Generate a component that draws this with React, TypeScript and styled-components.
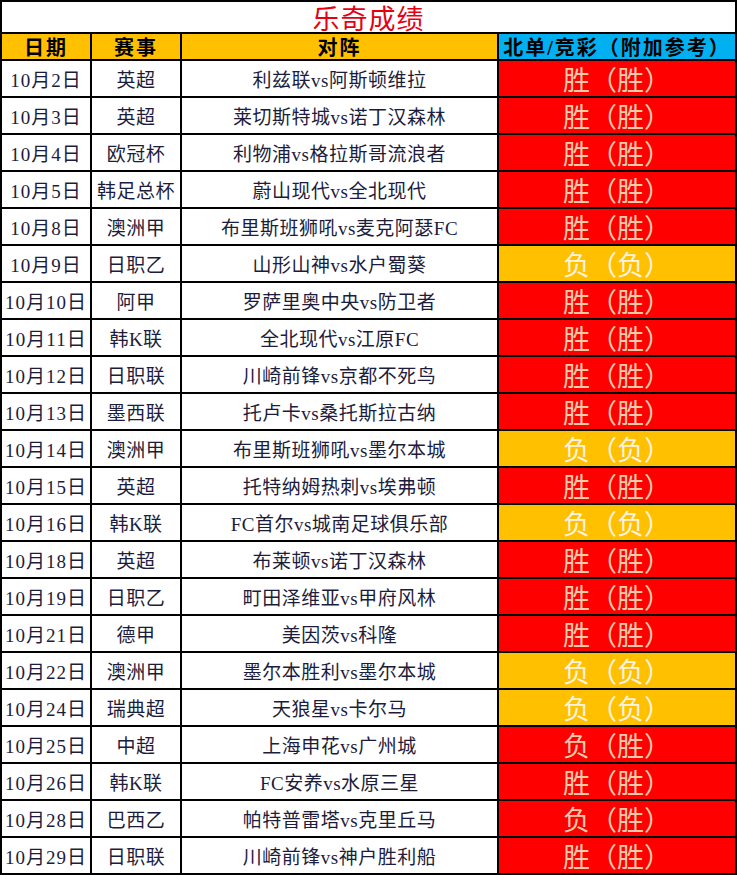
import styled, { createGlobalStyle } from "styled-components";

const GlobalStyle = createGlobalStyle`
    html, body {
        margin: 0;
        padding: 0;
        background: #ffffff;
    }
    body {
        font-family: "Liberation Serif", "Noto Sans CJK SC", serif;
    }
`;

type Outcome = "win" | "lose";

interface Match {
    date: string;
    league: string;
    teams: string;
    result: string;
    tone: Outcome;
}

const matches: Match[] = [
    { date: "10月2日", league: "英超", teams: "利兹联vs阿斯顿维拉", result: "胜（胜）", tone: "win" },
    { date: "10月3日", league: "英超", teams: "莱切斯特城vs诺丁汉森林", result: "胜（胜）", tone: "win" },
    { date: "10月4日", league: "欧冠杯", teams: "利物浦vs格拉斯哥流浪者", result: "胜（胜）", tone: "win" },
    { date: "10月5日", league: "韩足总杯", teams: "蔚山现代vs全北现代", result: "胜（胜）", tone: "win" },
    { date: "10月8日", league: "澳洲甲", teams: "布里斯班狮吼vs麦克阿瑟FC", result: "胜（胜）", tone: "win" },
    { date: "10月9日", league: "日职乙", teams: "山形山神vs水户蜀葵", result: "负（负）", tone: "lose" },
    { date: "10月10日", league: "阿甲", teams: "罗萨里奥中央vs防卫者", result: "胜（胜）", tone: "win" },
    { date: "10月11日", league: "韩K联", teams: "全北现代vs江原FC", result: "胜（胜）", tone: "win" },
    { date: "10月12日", league: "日职联", teams: "川崎前锋vs京都不死鸟", result: "胜（胜）", tone: "win" },
    { date: "10月13日", league: "墨西联", teams: "托卢卡vs桑托斯拉古纳", result: "胜（胜）", tone: "win" },
    { date: "10月14日", league: "澳洲甲", teams: "布里斯班狮吼vs墨尔本城", result: "负（负）", tone: "lose" },
    { date: "10月15日", league: "英超", teams: "托特纳姆热刺vs埃弗顿", result: "胜（胜）", tone: "win" },
    { date: "10月16日", league: "韩K联", teams: "FC首尔vs城南足球俱乐部", result: "负（负）", tone: "lose" },
    { date: "10月18日", league: "英超", teams: "布莱顿vs诺丁汉森林", result: "胜（胜）", tone: "win" },
    { date: "10月19日", league: "日职乙", teams: "町田泽维亚vs甲府风林", result: "胜（胜）", tone: "win" },
    { date: "10月21日", league: "德甲", teams: "美因茨vs科隆", result: "胜（胜）", tone: "win" },
    { date: "10月22日", league: "澳洲甲", teams: "墨尔本胜利vs墨尔本城", result: "负（负）", tone: "lose" },
    { date: "10月24日", league: "瑞典超", teams: "天狼星vs卡尔马", result: "负（负）", tone: "lose" },
    { date: "10月25日", league: "中超", teams: "上海申花vs广州城", result: "负（胜）", tone: "win" },
    { date: "10月26日", league: "韩K联", teams: "FC安养vs水原三星", result: "胜（胜）", tone: "win" },
    { date: "10月28日", league: "巴西乙", teams: "帕特普雷塔vs克里丘马", result: "负（胜）", tone: "win" },
    { date: "10月29日", league: "日职联", teams: "川崎前锋vs神户胜利船", result: "胜（胜）", tone: "win" },
];

const Sheet = styled.div`
    display: grid;
    grid-template-columns: 88px 88px 315px 1fr;
    grid-template-rows: 30px 25px;
    grid-auto-rows: 35px;
    gap: 2px;
    padding: 2px;
    width: 737px;
    box-sizing: border-box;
    background-color: #000000;
`;

const Title = styled.div`
    grid-column: 1 / -1;
    display: flex;
    align-items: center;
    justify-content: center;
    background-color: #ffffff;
    color: #e60012;
    font-size: 27px;
    letter-spacing: 1px;
`;

const HeadCell = styled.div<{ $blue?: boolean }>`
    display: flex;
    align-items: center;
    justify-content: center;
    background-color: ${(p) => (p.$blue ? "#00b0f0" : "#ffc000")};
    color: #000000;
    font-size: 20px;
    font-weight: 700;
    letter-spacing: 2px;
`;

const Cell = styled.div<{ $wide?: boolean }>`
    display: flex;
    align-items: center;
    justify-content: center;
    background-color: #ffffff;
    color: #1c1c3c;
    font-size: 19px;
    letter-spacing: ${(p) => (p.$wide ? "1px" : "0.5px")};
    white-space: nowrap;
`;

const ResultCell = styled.div<{ $tone: Outcome }>`
    display: flex;
    align-items: center;
    justify-content: center;
    background-color: ${(p) => (p.$tone === "win" ? "#ff0000" : "#ffc000")};
    color: ${(p) => (p.$tone === "win" ? "#f8cbad" : "#fff3e2")};
    font-size: 27px;
    white-space: nowrap;
`;

const Row = ({ match }: { match: Match }) => (
    <>
        <Cell $wide>{match.date}</Cell>
        <Cell>{match.league}</Cell>
        <Cell>{match.teams}</Cell>
        <ResultCell $tone={match.tone}>{match.result}</ResultCell>
    </>
);

const App = () => {
    return (
        <>
            <GlobalStyle />
            <Sheet>
                <Title>乐奇成绩</Title>
                <HeadCell>日期</HeadCell>
                <HeadCell>赛事</HeadCell>
                <HeadCell>对阵</HeadCell>
                <HeadCell $blue>北单/竞彩（附加参考）</HeadCell>
                {matches.map((m) => (
                    <Row key={m.date} match={m} />
                ))}
            </Sheet>
        </>
    );
};

export default App;
